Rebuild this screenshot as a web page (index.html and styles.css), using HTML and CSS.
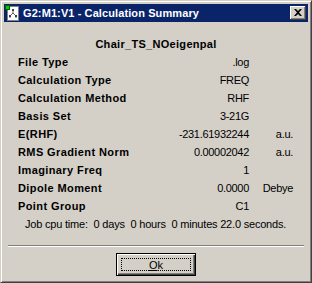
FILE: index.html
```html
<!DOCTYPE html>
<html lang="en">

<head>
    <meta charset="UTF-8">
    <meta name="viewport" content="width=device-width, initial-scale=1.0">
    <title>Calculation Summary</title>
    <link rel="stylesheet" href="styles.css">
</head>

<body>
    <div class="window">
        <div class="titlebar">
            <svg class="app-icon" width="16" height="16" viewBox="0 0 16 16">
                <rect x="2.5" y="1.5" width="11" height="14" fill="#fff" stroke="#808080"/>
                <path d="M8 5 L8 8 M8 8 L5 11 M8 8 L11 11 M5 11 L5 13 M11 11 L11 13" stroke="#606060" stroke-width="1" fill="none"/>
                <rect x="7" y="4" width="2" height="2" fill="#404040"/>
                <rect x="4" y="10" width="2" height="2" fill="#404040"/>
                <rect x="10" y="10" width="2" height="2" fill="#404040"/>
                <rect x="0.5" y="0.5" width="4" height="4" fill="#00d000" stroke="#006000"/>
            </svg>
            <span class="title">G2:M1:V1 - Calculation Summary</span>
            <button class="close-btn">
                <svg width="8" height="7" viewBox="0 0 8 7">
                    <path d="M0 0 L2 0 L4 2 L6 0 L8 0 L5 3.5 L8 7 L6 7 L4 5 L2 7 L0 7 L3 3.5 Z" fill="#000"/>
                </svg>
            </button>
        </div>

        <div class="content">
            <div class="heading">Chair_TS_NOeigenpal</div>

            <div class="summary">
                <div class="label">File Type</div>
                <div class="value">.log</div>
                <div class="unit"></div>

                <div class="label">Calculation Type</div>
                <div class="value">FREQ</div>
                <div class="unit"></div>

                <div class="label">Calculation Method</div>
                <div class="value">RHF</div>
                <div class="unit"></div>

                <div class="label">Basis Set</div>
                <div class="value">3-21G</div>
                <div class="unit"></div>

                <div class="label">E(RHF)</div>
                <div class="value">-231.61932244</div>
                <div class="unit">a.u.</div>

                <div class="label">RMS Gradient Norm</div>
                <div class="value">0.00002042</div>
                <div class="unit">a.u.</div>

                <div class="label">Imaginary Freq</div>
                <div class="value">1</div>
                <div class="unit"></div>

                <div class="label">Dipole Moment</div>
                <div class="value">0.0000</div>
                <div class="unit">Debye</div>

                <div class="label">Point Group</div>
                <div class="value">C1</div>
                <div class="unit"></div>
            </div>

            <div class="cpu-time">Job cpu time:  0 days  0 hours  0 minutes 22.0 seconds.</div>
        </div>

        <div class="separator"></div>

        <div class="actions">
            <button class="ok-btn"><span class="focus"><u>O</u>k</span></button>
        </div>
    </div>
</body>

</html>
```

FILE: styles.css
```css
body {
    margin: 0;
    font-family: "Liberation Sans", Arial, sans-serif;
    font-size: 11px;
    background-color: #d4d0c8;
    color: #000;
}

.window {
    width: 312px;
    height: 283px;
    box-sizing: border-box;
    background: #d4d0c8;
    border: 1px solid;
    border-color: #d4d0c8 #404040 #404040 #d4d0c8;
    box-shadow: inset 1px 1px #fff, inset -1px -1px #808080;
    padding: 3px;
}

.titlebar {
    height: 18px;
    background: #0a246a;
    display: flex;
    align-items: center;
    padding: 0 2px 0 1px;
}

.app-icon {
    flex: none;
}

.title {
    color: #fff;
    font-weight: bold;
    letter-spacing: 0.1px;
    margin-left: 2px;
    flex: 1;
    line-height: 18px;
}

.close-btn {
    width: 16px;
    height: 14px;
    padding: 0;
    border: none;
    background: #d4d0c8;
    box-shadow: inset -1px -1px #404040, inset 1px 1px #fff, inset -2px -2px #808080;
    display: flex;
    align-items: center;
    justify-content: center;
    padding-bottom: 1px;
}

.content {
    padding: 13px 0 0 14px;
}

.heading {
    font-weight: bold;
    letter-spacing: 0.3px;
    text-align: center;
    line-height: 18px;
    padding-right: 14px;
}

.summary {
    display: grid;
    grid-template-columns: 130px 101px 44px;
    grid-auto-rows: 18px;
    line-height: 18px;
}

.label {
    font-weight: bold;
    letter-spacing: 0.4px;
    white-space: nowrap;
}

.value,
.unit {
    text-align: right;
    letter-spacing: -0.3px;
    white-space: nowrap;
}

.cpu-time {
    white-space: pre;
    letter-spacing: -0.2px;
    line-height: 18px;
    padding-left: 7px;
}

.separator {
    margin: 12px 0 0 4px;
    width: 296px;
    border-top: 1px solid #808080;
    border-bottom: 1px solid #fff;
}

.actions {
    display: flex;
    justify-content: center;
    margin-top: 6px;
}

.ok-btn {
    width: 80px;
    height: 23px;
    padding: 4px;
    border: 1px solid #000;
    background: #d4d0c8;
    box-shadow: inset 1px 1px #fff, inset -1px -1px #404040, inset -2px -2px #808080;
    font-family: "Liberation Sans", Arial, sans-serif;
    font-size: 11px;
    color: #000;
    display: flex;
}

.focus {
    flex: 1;
    border: 1px dotted #000;
    display: flex;
    align-items: center;
    justify-content: center;
}
```
